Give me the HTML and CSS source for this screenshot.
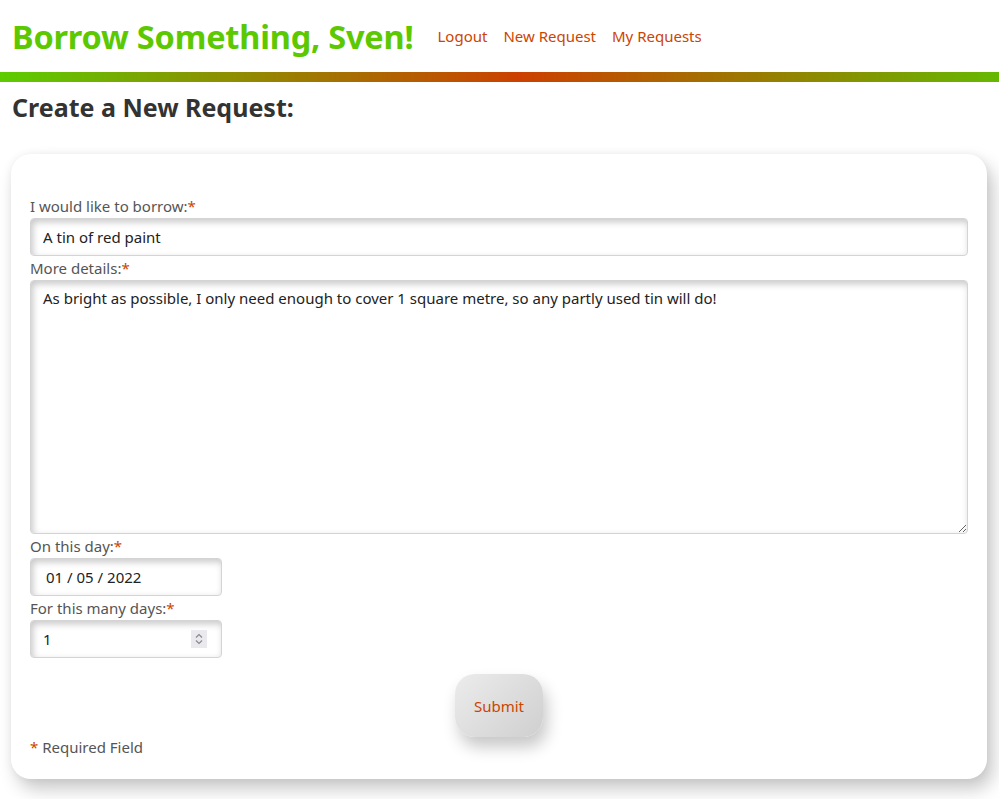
FILE: index.html
```html
<!DOCTYPE html>
<html lang="en">
<head>
<meta charset="utf-8">
<title>Borrow Something</title>
<link rel="stylesheet" href="styles.css">
</head>
<body>
<header class="site-header">
  <h1 class="brand">Borrow Something, Sven!</h1>
  <nav class="nav">
    <a href="#">Logout</a>
    <a href="#">New Request</a>
    <a href="#">My Requests</a>
  </nav>
</header>
<div class="rainbow"></div>
<h2 class="page-title">Create a New Request:</h2>
<main class="card">
  <form class="form">
    <label class="label" for="item">I would like to borrow:<span class="req">*</span></label>
    <input class="field" id="item" type="text" value="A tin of red paint">
    <label class="label" for="details">More details:<span class="req">*</span></label>
    <textarea class="field area" id="details">As bright as possible, I only need enough to cover 1 square metre, so any partly used tin will do!</textarea>
    <label class="label" for="day">On this day:<span class="req">*</span></label>
    <input class="field small date" id="day" type="text" value="01 / 05 / 2022">
    <label class="label" for="days">For this many days:<span class="req">*</span></label>
    <div class="num-wrap">
      <input class="field small" id="days" type="text" value="1">
      <span class="spinner"><svg width="14" height="18" viewBox="0 0 14 18"><path d="M4 7.5 L7 4.5 L10 7.5" fill="none" stroke="#8a8a8a" stroke-width="1.2"/><path d="M4 10.5 L7 13.5 L10 10.5" fill="none" stroke="#8a8a8a" stroke-width="1.2"/></svg></span>
    </div>
    <div class="actions"><button class="submit" type="button">Submit</button></div>
    <p class="note"><span class="req">*</span> Required Field</p>
  </form>
</main>
</body>
</html>
```
FILE: styles.css
```css
html, body { margin: 0; padding: 0; background: #fff; }
body {
  font-family: "Noto Sans", "Open Sans", sans-serif;
  color: #444;
  padding: 0 12px 0 11px;
  width: 976px;
}
.site-header {
  display: flex;
  align-items: center;
  height: 72px;
  margin: 0 -12px 0 -11px;
  padding: 0 0 0 12px;
}
.brand {
  margin: 0 24px 0 0;
  font-size: 32.5px;
  font-weight: 700;
  color: #5cc800;
  letter-spacing: -0.2px;
}
.nav { display: flex; gap: 16px; }
.nav a {
  color: #cc4400;
  text-decoration: none;
  font-size: 15px;
}
.rainbow {
  height: 10px;
  margin: 0 -12px 0 -11px;
  background: linear-gradient(to right, #5ccc00 0%, #cc4000 52%, #66b800 100%);
}
.page-title {
  margin: 10px 0 0 1px;
  font-size: 25px;
  font-weight: 700;
  color: #333;
  line-height: 30px;
}
.card {
  margin-top: 32px;
  background: #fff;
  border-radius: 20px;
  box-shadow: 6px 10px 18px rgba(0,0,0,0.22), 0 0 8px rgba(0,0,0,0.05);
  padding: 42px 19px 22px 19px;
  margin-bottom: 20px;
}
.form { display: flex; flex-direction: column; }
.label {
  font-size: 15px;
  color: #555;
  line-height: 20px;
  margin-bottom: 2px;
}
.req { color: #cc4400; }
.field {
  box-sizing: border-box;
  height: 38px;
  border: 1px solid #d4d4d4;
  border-radius: 4px;
  background: #fff;
  box-shadow: inset 2px 3px 7px rgba(0,0,0,0.22);
  font-family: inherit;
  font-size: 15px;
  color: #222;
  padding: 0 12px;
  margin-bottom: 2px;
  outline: none;
}
.area {
  height: 254px;
  padding: 7px 12px;
  resize: vertical;
  line-height: 20px;
}
.small { width: 192px; }
.date { padding-left: 15px; }
.num-wrap { position: relative; width: 192px; }
.num-wrap .field { width: 100%; }
.spinner {
  position: absolute;
  left: 161px;
  top: 10px;
  width: 16px;
  height: 18px;
  background: #e9e9ee;
  display: flex;
  align-items: center;
  justify-content: center;
}
.actions { display: flex; justify-content: center; margin-top: 14px; }
.submit {
  width: 88px;
  height: 63px;
  border: none;
  border-radius: 20px;
  background: linear-gradient(135deg, #ececec, #cfcfcf);
  color: #cc4400;
  font-family: inherit;
  font-size: 15px;
  box-shadow: 4px 10px 16px rgba(0,0,0,0.22);
}
.note {
  margin: 0;
  line-height: 20px;
  font-size: 15px;
  color: #555;
}
```
